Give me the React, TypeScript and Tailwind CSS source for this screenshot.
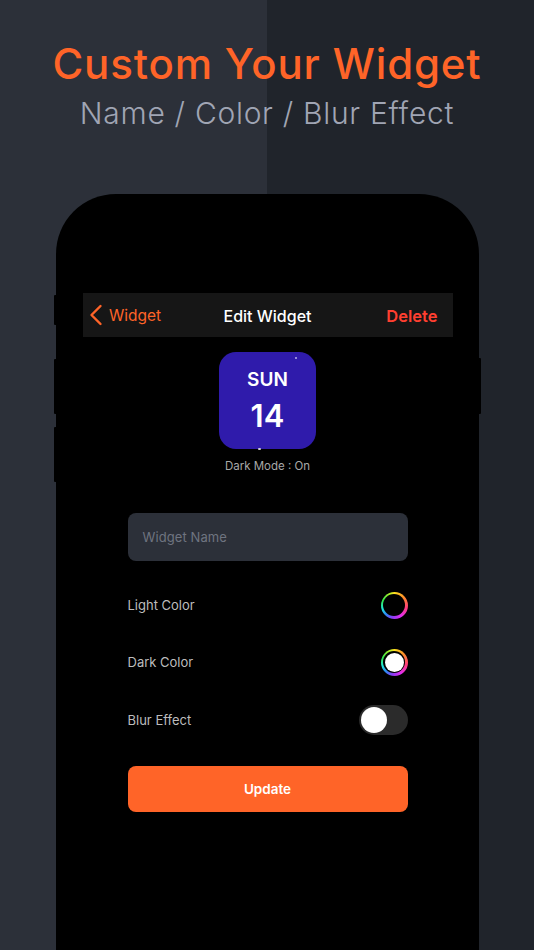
import React from 'react';
import { ChevronLeft } from 'lucide-react';

const font = { fontFamily: 'Inter, "Noto Sans", sans-serif' };

const Ring = ({ filled }: { filled?: boolean }) => (
    <div className="w-[27px] h-[27px] rounded-full p-[2.5px] bg-[conic-gradient(#ffe01e_0deg,#ff8a2b_50deg,#ff3d7a_100deg,#e02cf0_150deg,#8a3cf5_190deg,#2a8cf5_225deg,#20e6d8_255deg,#34ea4a_295deg,#a8ee2c_335deg,#ffe01e_360deg)]">
        <div className="w-full h-full rounded-full bg-black p-[1.5px]">
            {filled && <div className="w-full h-full rounded-full bg-white"></div>}
        </div>
    </div>
);

export default function App() {
    return (
        <div style={font} className="w-[534px] h-[950px] overflow-hidden flex flex-col items-center bg-[linear-gradient(90deg,#2c3039_0%,#2c3039_50%,#20242b_50%,#20242b_100%)]">
            {/* Heading */}
            <h1 className="mt-[37px] h-[54px] leading-[54px] text-[42px] font-medium tracking-[0.85px] text-[#ff6428]">Custom Your Widget</h1>
            <p className="mt-[1px] h-[42px] leading-[42px] text-[30px] font-light tracking-[0.7px] text-[#a0a5b4]">Name / Color / Blur Effect</p>

            {/* Phone */}
            <div className="relative mt-[60px] ml-[1px] w-[422.5px] flex-1 bg-black rounded-t-[60px] flex flex-col items-center pt-[99px]">
                <span className="absolute -left-[2.5px] top-[101px] w-[3px] h-[30px] bg-black rounded-l-[1px]"></span>
                <span className="absolute -left-[2.5px] top-[165px] w-[3px] h-[55px] bg-black rounded-l-[1px]"></span>
                <span className="absolute -left-[2.5px] top-[233px] w-[3px] h-[55px] bg-black rounded-l-[1px]"></span>
                <span className="absolute -right-[2px] top-[164px] w-[3px] h-[56px] bg-black rounded-r-[1px]"></span>

                {/* Nav bar */}
                <div className="w-[370px] h-[44px] bg-[#161616] flex items-center justify-between pr-[15px] relative">
                    <div className="flex items-center text-[#ff6428]">
                        <ChevronLeft size={36} strokeWidth={1.6} className="-ml-[5px] -mr-[4.5px]" />
                        <span className="text-[15.5px] translate-y-[0.5px]">Widget</span>
                    </div>
                    <span className="absolute left-0 right-0 text-center text-[16px] font-medium text-white translate-y-[0.5px]">Edit Widget</span>
                    <span className="text-[16.5px] font-semibold text-[#ff3f30] translate-y-[0.5px]">Delete</span>
                </div>

                {/* Widget preview */}
                <div className="relative mt-[15px] w-[97px] h-[97px] rounded-[17px] bg-[#2f1bab] flex flex-col items-center text-white">
                    <span className="mt-[16px] leading-[24px] text-[19px] font-semibold">SUN</span>
                    <span className="mt-[4.5px] leading-[38px] text-[31px] font-semibold">14</span>
                    <span className="absolute top-[5px] right-[19px] w-[2px] h-[2px] rounded-full bg-[#b9b2ea]"></span>
                    <span className="absolute -bottom-[1px] left-[39px] w-[3px] h-[2px] rounded-full bg-[#c9c9d6]"></span>
                </div>
                <p className="mt-[9px] leading-[17px] text-[11.5px] text-[#a8a8a8]">Dark Mode : On</p>

                {/* Form */}
                <div className="mt-[38px] w-[280px] flex flex-col">
                    <div className="h-[48px] rounded-[8px] bg-[#2c3039] flex items-center px-[15px] text-[13px] tracking-[0.1px] text-[#6f7480]">
                        <span className="translate-y-[1px]">Widget Name</span>
                    </div>
                    <div className="mt-[30px] h-[28px] flex items-center justify-between text-[13px] text-[#bdbdbd]">
                        <span className="translate-y-[1px]">Light Color</span>
                        <Ring />
                    </div>
                    <div className="mt-[29px] h-[28px] flex items-center justify-between text-[13px] text-[#bdbdbd]">
                        <span className="translate-y-[1px]">Dark Color</span>
                        <Ring filled />
                    </div>
                    <div className="mt-[29px] h-[30px] flex items-center justify-between text-[13px] text-[#bdbdbd]">
                        <span className="translate-y-[1px]">Blur Effect</span>
                        <div className="w-[49px] h-[30px] rounded-full bg-[#2b2b2b] p-[2px]">
                            <div className="w-[26px] h-[26px] rounded-full bg-white"></div>
                        </div>
                    </div>
                    <button className="mt-[31px] h-[46px] rounded-[8px] bg-[#ff6428] text-white text-[13.5px] font-semibold">Update</button>
                </div>
            </div>
        </div>
    );
}
